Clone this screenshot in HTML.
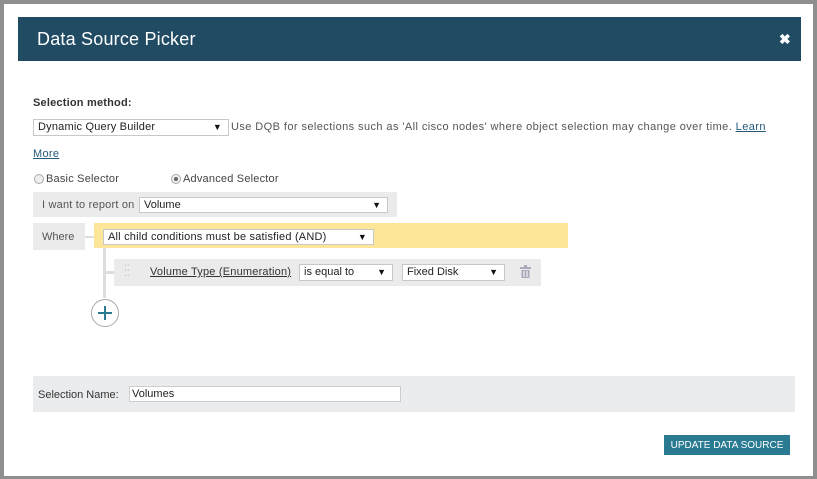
<!DOCTYPE html>
<html><head><style>
*{box-sizing:border-box;margin:0;padding:0}
body{width:817px;height:479px;background:#8f8f8f;font-family:"Liberation Sans",sans-serif;font-size:11px;color:#333;position:relative;overflow:hidden}
.a{position:absolute}
.sel{position:absolute;background:#fff;border:1px solid #c8c8c8;padding-left:4px;line-height:15px;font-size:11px;color:#222}
.sel:after{content:"▼";position:absolute;right:6px;top:0;font-size:9px;color:#111}
a{color:#245a7d;text-decoration:underline}
</style></head><body>
<div class="a" style="left:4px;top:4px;width:809px;height:472px;background:#fff"></div>
<div class="a" style="left:18px;top:17px;width:783px;height:44px;background:#204b63"></div>
<div class="a" style="left:37px;top:29px;color:#fff;font-size:18px;letter-spacing:0.2px">Data Source Picker</div>
<div class="a" style="left:779px;top:31px;color:#fff;font-size:14px;font-weight:bold">✖</div>
<div class="a" style="left:33px;top:97px;font-weight:bold;color:#333;letter-spacing:0.2px">Selection method:</div>
<div class="sel" style="left:33px;top:119px;width:196px;height:17px;letter-spacing:0.2px">Dynamic Query Builder</div>
<div class="a" style="left:231px;top:121px;color:#555;letter-spacing:0.42px;white-space:nowrap">Use DQB for selections such as 'All cisco nodes' where object selection may change over time. <a>Learn</a></div>
<div class="a" style="left:33px;top:148px;letter-spacing:0.3px"><a>More</a></div>
<div class="a" style="left:34px;top:174px;width:10px;height:10px;border:1px solid #aaa;border-radius:50%;background:#eee"></div>
<div class="a" style="left:46px;top:173px;color:#444;letter-spacing:0.2px">Basic Selector</div>
<div class="a" style="left:171px;top:174px;width:10px;height:10px;border:1px solid #aaa;border-radius:50%;background:#eee"><div style="margin:2px;width:4px;height:4px;border-radius:50%;background:#666"></div></div>
<div class="a" style="left:183px;top:173px;color:#444;letter-spacing:0.2px">Advanced Selector</div>
<div class="a" style="left:33px;top:192px;width:364px;height:25px;background:#ebebeb"></div>
<div class="a" style="left:42px;top:199px;color:#555;letter-spacing:0.2px">I want to report on</div>
<div class="sel" style="left:139px;top:197px;width:249px;height:16px">Volume</div>
<div class="a" style="left:33px;top:223px;width:52px;height:27px;background:#ebebeb"></div>
<div class="a" style="left:42px;top:231px;color:#555">Where</div>
<div class="a" style="left:85px;top:236px;width:9px;height:2px;background:#ddd"></div>
<div class="a" style="left:94px;top:223px;width:474px;height:25px;background:#fde59a"></div>
<div class="sel" style="left:103px;top:229px;width:271px;height:16px;letter-spacing:0.2px">All child conditions must be satisfied (AND)</div>
<div class="a" style="left:103px;top:248px;width:3px;height:50px;background:#ddd"></div>
<div class="a" style="left:106px;top:271px;width:8px;height:3px;background:#ddd"></div>
<div class="a" style="left:114px;top:259px;width:427px;height:27px;background:#ebebeb"></div>
<div class="a" style="left:124px;top:266px;color:#bbb;font-size:9px;line-height:5px">⁚⁚<br>⁚⁚</div>
<div class="a" style="left:150px;top:266px;letter-spacing:0.2px"><a style="color:#333">Volume Type (Enumeration)</a></div>
<div class="sel" style="left:299px;top:264px;width:94px;height:17px">is equal to</div>
<div class="sel" style="left:402px;top:264px;width:103px;height:17px">Fixed Disk</div>
<svg class="a" style="left:520px;top:265px" width="12" height="13"><rect x="0" y="2" width="11" height="2" fill="#aab"/><rect x="4" y="0" width="3" height="2" fill="#aab"/><rect x="1.5" y="5" width="8" height="8" fill="#aab"/><path d="M4 6v6M7 6v6" stroke="#fff"/></svg>
<div class="a" style="left:91px;top:299px;width:28px;height:28px;border:1.5px solid #aaa;border-radius:50%;background:#fff"></div>
<div class="a" style="left:98px;top:312px;width:14px;height:1.5px;background:#2a7a92"></div>
<div class="a" style="left:104px;top:306px;width:1.5px;height:14px;background:#2a7a92"></div>
<div class="a" style="left:33px;top:376px;width:762px;height:36px;background:#ebecee"></div>
<div class="a" style="left:38px;top:389px;color:#333">Selection Name:</div>
<div class="a" style="left:129px;top:386px;width:272px;height:16px;background:#fff;border:1px solid #ccc;padding-left:2px;line-height:14px;color:#222">Volumes</div>
<div class="a" style="left:664px;top:435px;width:126px;height:20px;background:#2a7a92;color:#fff;font-size:10px;display:flex;align-items:center;justify-content:center">UPDATE DATA SOURCE</div>
</body></html>
